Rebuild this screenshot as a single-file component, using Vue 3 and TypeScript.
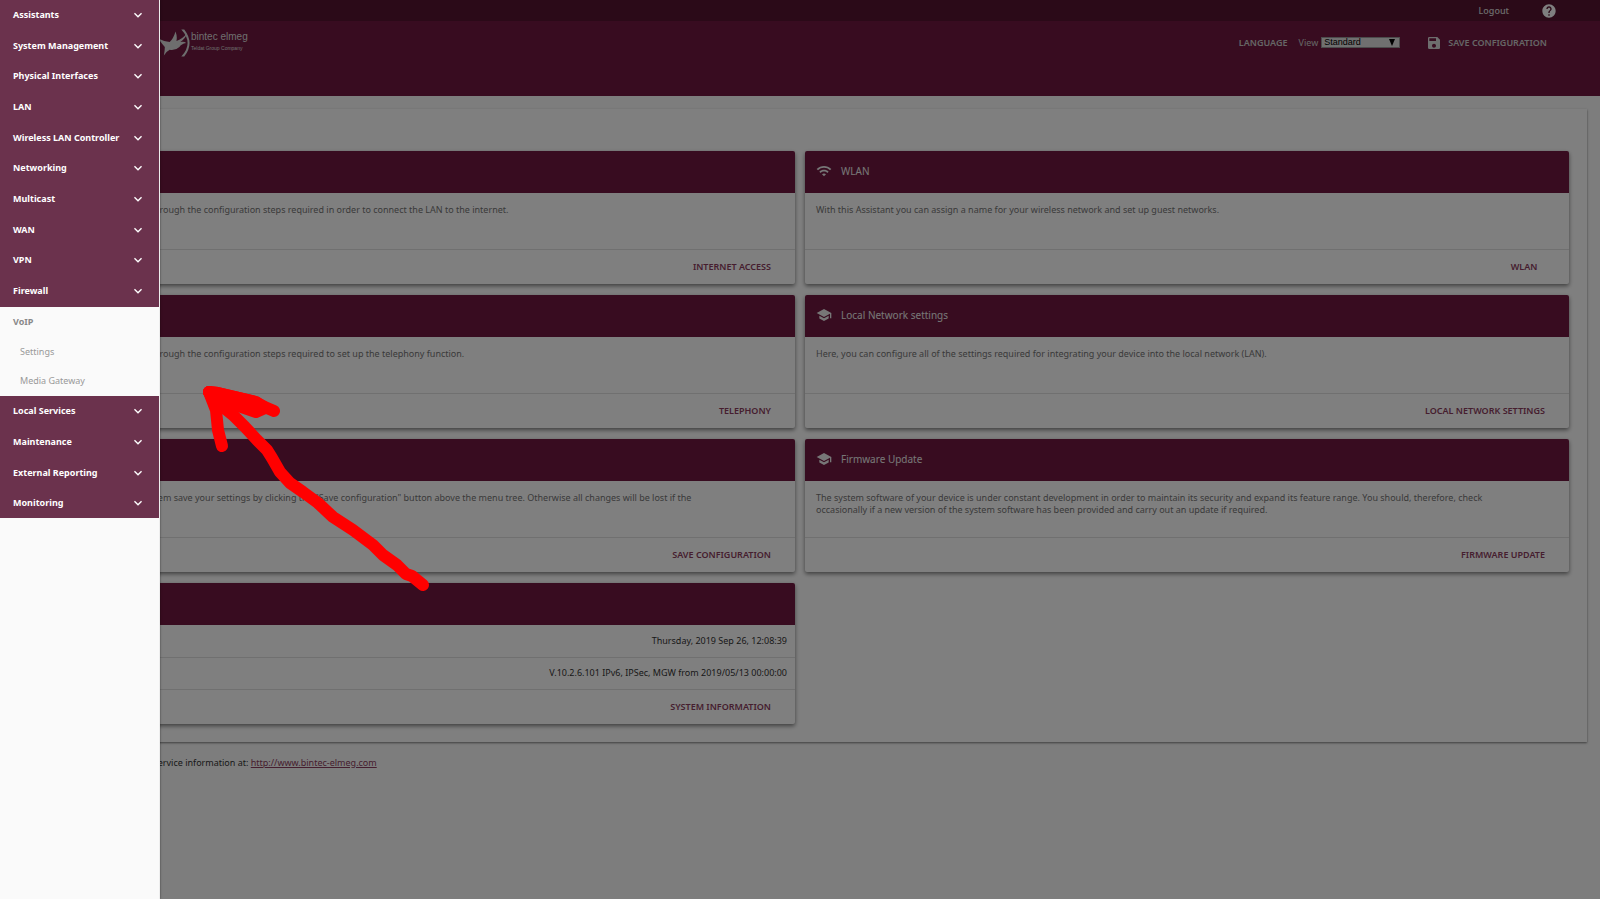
<script setup lang="ts">
import { ref } from 'vue'

interface MenuEntry {
  label: string
  children?: string[]
}

interface Card {
  title: string
  icon: string
  text: string
  action: string
}

const icons: Record<string, string> = {
  wifi: 'M1 9l2 2c4.97-4.97 13.03-4.97 18 0l2-2C16.93 2.93 7.08 2.93 1 9zm8 8l3 3 3-3c-1.65-1.66-4.34-1.66-6 0zm-4-4l2 2c2.76-2.76 7.24-2.76 10 0l2-2C15.14 9.14 8.87 9.14 5 13z',
  school: 'M5 13.18v4L12 21l7-3.82v-4L12 17l-7-3.82zM12 3L1 9l11 6 9-4.91V17h2V9L12 3z',
  save: 'M17 3H5a2 2 0 0 0-2 2v14a2 2 0 0 0 2 2h14c1.1 0 2-.9 2-2V7l-4-4zm-5 16c-1.66 0-3-1.34-3-3s1.34-3 3-3 3 1.34 3 3-1.34 3-3 3zm3-10H5V5h10v4z',
  help: 'M12 2C6.48 2 2 6.48 2 12s4.48 10 10 10 10-4.48 10-10S17.52 2 12 2zm1 17h-2v-2h2v2zm2.07-7.75l-.9.92C13.45 12.9 13 13.5 13 15h-2v-.5c0-1.1.45-2.1 1.17-2.83l1.24-1.26c.37-.36.59-.86.59-1.41 0-1.1-.9-2-2-2s-2 .9-2 2H8c0-2.21 1.79-4 4-4s4 1.79 4 4c0 .88-.36 1.68-.93 2.25z',
  more: 'M16.59 8.59L12 13.17 7.41 8.59 6 10l6 6 6-6z',
}

const menu: MenuEntry[] = [
  { label: 'Assistants' },
  { label: 'System Management' },
  { label: 'Physical Interfaces' },
  { label: 'LAN' },
  { label: 'Wireless LAN Controller' },
  { label: 'Networking' },
  { label: 'Multicast' },
  { label: 'WAN' },
  { label: 'VPN' },
  { label: 'Firewall' },
  { label: 'VoIP', children: ['Settings', 'Media Gateway'] },
  { label: 'Local Services' },
  { label: 'Maintenance' },
  { label: 'External Reporting' },
  { label: 'Monitoring' },
]

const cards: Card[] = [
  { title: 'Internet', icon: 'school', text: 'This Assistant guides you through the configuration steps required in order to connect the LAN to the internet.', action: 'Internet Access' },
  { title: 'WLAN', icon: 'wifi', text: 'With this Assistant you can assign a name for your wireless network and set up guest networks.', action: 'WLAN' },
  { title: 'Telephony', icon: 'school', text: 'This Assistant guides you through the configuration steps required to set up the telephony function.', action: 'Telephony' },
  { title: 'Local Network settings', icon: 'school', text: 'Here, you can configure all of the settings required for integrating your device into the local network (LAN).', action: 'Local Network settings' },
  { title: 'Save', icon: 'save', text: 'After reconfiguring the system save your settings by clicking the "Save configuration" button above the menu tree. Otherwise all changes will be lost if the gateway is restarted.', action: 'Save configuration' },
  { title: 'Firmware Update', icon: 'school', text: 'The system software of your device is under constant development in order to maintain its security and expand its feature range. You should, therefore, check occasionally if a new version of the system software has been provided and carry out an update if required.', action: 'Firmware Update' },
]

const view = ref('Standard')
</script>

<template>
  <div class="app">
    <div class="page">
      <header>
        <div class="topbar">
          <a href="#logout">Logout</a>
          <button class="help" type="button" aria-label="Help">
            <svg viewBox="0 0 24 24"><path :d="icons.help" /></svg>
          </button>
        </div>
        <div class="banner">
          <div class="logo">
            <svg class="bird" viewBox="0 0 32 28">
              <path d="M-2 9Q4 13 10 13Q14 9 16 2Q18 7 17 12Q23 10 28 4Q26 10 21 13Q25 12 27 14Q22 15 20 18Q16 22 10 21Q6 23 4 27Q5 21 5 18Q2 15 -2 9Z" />
              <path d="M22 0Q35 14 22 28H25Q36 14 25 0Z" />
            </svg>
            <div class="brand">
              <span class="name">bintec elmeg</span>
              <span class="claim">Teldat Group Company</span>
            </div>
          </div>
          <div class="tools">
            <button class="language" type="button">LANGUAGE</button>
            <label class="view">View
              <span class="picker">
                <select v-model="view">
                  <option>Standard</option>
                </select>
                <svg viewBox="0 0 6 7"><path d="M0 0H6L3 7Z" /></svg>
              </span>
            </label>
            <button class="save" type="button">
              <svg viewBox="0 0 24 24"><path :d="icons.save" /></svg>
              <span>SAVE CONFIGURATION</span>
            </button>
          </div>
        </div>
      </header>

      <main>
        <section v-for="card in cards" :key="card.title" class="card">
          <h2>
            <svg viewBox="0 0 24 24"><path :d="icons[card.icon]" /></svg>
            <span>{{ card.title }}</span>
          </h2>
          <p>{{ card.text }}</p>
          <div class="actions"><button type="button">{{ card.action }}</button></div>
        </section>
        <section class="card">
          <h2>
            <svg viewBox="0 0 24 24"><path :d="icons.school" /></svg>
            <span>System</span>
          </h2>
          <table>
            <tbody>
              <tr><th>Date</th><td>Thursday, 2019 Sep 26, 12:08:39</td></tr>
              <tr><th>Version</th><td>V.10.2.6.101 IPv6, IPSec, MGW from 2019/05/13 00:00:00</td></tr>
            </tbody>
          </table>
          <div class="actions"><button type="button">System Information</button></div>
        </section>
      </main>

      <footer>You can find further product and service information at: <a href="http://www.bintec-elmeg.com">http://www.bintec-elmeg.com</a></footer>
    </div>

    <div class="backdrop"></div>

    <nav>
      <ul class="menu">
        <li v-for="entry in menu" :key="entry.label" :class="{ open: entry.children }">
          <button type="button">
            <span>{{ entry.label }}</span>
            <svg v-if="!entry.children" viewBox="0 0 24 24"><path :d="icons.more" /></svg>
          </button>
          <ul v-if="entry.children" class="submenu">
            <li v-for="child in entry.children" :key="child"><a href="#">{{ child }}</a></li>
          </ul>
        </li>
      </ul>
    </nav>

    <svg class="arrow" viewBox="0 0 230 212">
      <path d="M223 205L212 196L206 194L197 185L183 175L173 165L153 150L133 137L118 123L103 112L90 103L80 92L72 78L67 70L57 60L45 47L33 35L22 26L9 12" />
      <path d="M22 66L18 50L16 30L9 12" />
      <path d="M74 31L67 28L55 22L35 17L18 13L9 12" />
      <path class="fill" d="M9 12L18 13L35 17L56 22L65 28L56 32L30 23L18 28Z" />
    </svg>
  </div>
</template>

<style>
body {
  margin: 0;
  background: #fafafa;
}
</style>

<style scoped>
.app {
  position: relative;
  min-height: 100vh;
  font: 9px/12px "Noto Sans", "Open Sans", sans-serif;
  color: #333;
}
button {
  border: 0;
  padding: 0;
  background: none;
  font: inherit;
  color: inherit;
  cursor: pointer;
}
svg {
  display: block;
  fill: currentColor;
}
header {
  background: #701940;
  color: #fff;
}
.topbar {
  display: flex;
  align-items: center;
  justify-content: flex-end;
  gap: 32px;
  height: 21px;
  padding-right: 43px;
  background: #561430;
}
.topbar a {
  color: #ddd;
  font-weight: 500;
  text-decoration: none;
}
.help svg {
  width: 16px;
  height: 16px;
}
.banner {
  display: flex;
  align-items: flex-start;
  justify-content: space-between;
  height: 67px;
  padding: 8px 53px 0 160px;
}
.logo {
  display: flex;
  color: #ddd;
}
.bird {
  width: 31px;
  height: 28px;
}
.brand {
  display: flex;
  flex-direction: column;
  font-family: "Liberation Sans", sans-serif;
  white-space: nowrap;
}
.name {
  font-size: 10px;
  line-height: 16px;
}
.claim {
  font-size: 5px;
  line-height: 6px;
}
.tools {
  display: flex;
  align-items: center;
  height: 27px;
  color: #ccc;
  font-weight: 600;
}
.view {
  display: flex;
  align-items: center;
  gap: 3px;
  margin: 0 26px 0 11px;
  font-weight: 400;
}
.picker {
  position: relative;
}
.picker svg {
  position: absolute;
  top: 2px;
  right: 5px;
  width: 6px;
  height: 7px;
  color: #000;
  pointer-events: none;
}
select {
  display: block;
  appearance: none;
  width: 79px;
  height: 11px;
  padding: 0 2px;
  border: 1px solid #999;
  border-radius: 0;
  background: #e0e0e0;
  font: 9px/9px "Liberation Sans", sans-serif;
  color: #000;
}
.save {
  display: flex;
  align-items: center;
  gap: 6px;
}
.save svg {
  width: 16px;
  height: 16px;
  color: #ddd;
}
main {
  display: grid;
  grid-template-columns: 1fr 1fr;
  gap: 11px 10px;
  margin: 13px 13px 0;
  padding: 42px 18px 18px;
  background: #fff;
  box-shadow: 0 1px 2px rgba(0, 0, 0, 0.5);
}
.card {
  display: flex;
  flex-direction: column;
  border-radius: 2px;
  background: #fff;
  box-shadow: 0 2px 4px rgba(0, 0, 0, 0.5);
}
h2 {
  display: flex;
  align-items: center;
  gap: 9px;
  height: 40px;
  margin: 0;
  padding: 0 0 2px 11px;
  border-radius: 2px 2px 0 0;
  background: #701940;
  color: #eee;
  font-size: 10px;
  font-weight: 400;
}
h2 svg {
  width: 16px;
  height: 16px;
}
p {
  min-height: 36px;
  margin: 0;
  padding: 11px 70px 9px 11px;
  color: #757575;
}
.actions {
  display: flex;
  justify-content: flex-end;
  height: 34px;
  padding-right: 14px;
  border-top: 1px solid #e0e0e0;
}
.actions button {
  min-width: 62px;
  padding: 0 10px 1px;
  color: #8c3d5e;
  font-weight: 600;
  text-transform: uppercase;
}
table {
  border-collapse: collapse;
}
tr + tr {
  border-top: 1px solid #e0e0e0;
}
th,
td {
  height: 32px;
  box-sizing: border-box;
  padding: 0 8px 0 11px;
  text-align: left;
  font-weight: 400;
}
td {
  text-align: right;
}
footer {
  margin: 15px 13px 0;
}
footer a {
  color: #8c3d5e;
}
.backdrop {
  position: absolute;
  inset: 0;
  background: rgba(0, 0, 0, 0.5);
}
nav {
  position: absolute;
  top: 0;
  bottom: 0;
  left: 0;
  box-sizing: border-box;
  width: 160px;
  border-right: 1px solid #eee;
  background: #fafafa;
  box-shadow: 0 0 2px rgba(0, 0, 0, 0.5);
}
ul {
  margin: 0;
  padding: 0;
  list-style: none;
}
.menu > li {
  background: #6b324d;
  color: #fff;
}
.menu button {
  display: flex;
  align-items: center;
  justify-content: space-between;
  width: 100%;
  height: 31px;
  padding: 0 13px 2px;
  font-weight: 700;
  white-space: nowrap;
}
.menu > li:nth-child(3n + 2) button,
.menu > li:last-child button {
  height: 30px;
  padding-bottom: 0;
}
.menu svg {
  width: 16px;
  height: 16px;
}
.menu > li.open {
  padding-bottom: 1px;
  background: #fafafa;
  color: #888;
}
.submenu a {
  display: flex;
  align-items: center;
  height: 29px;
  padding-left: 20px;
  color: #999;
  text-decoration: none;
}
.arrow {
  position: absolute;
  top: 380px;
  left: 200px;
  width: 230px;
  height: 212px;
  pointer-events: none;
}
.arrow path {
  fill: none;
  stroke: #f00;
  stroke-width: 12;
  stroke-linecap: round;
  stroke-linejoin: round;
}
.arrow .fill {
  fill: #f00;
}
</style>
